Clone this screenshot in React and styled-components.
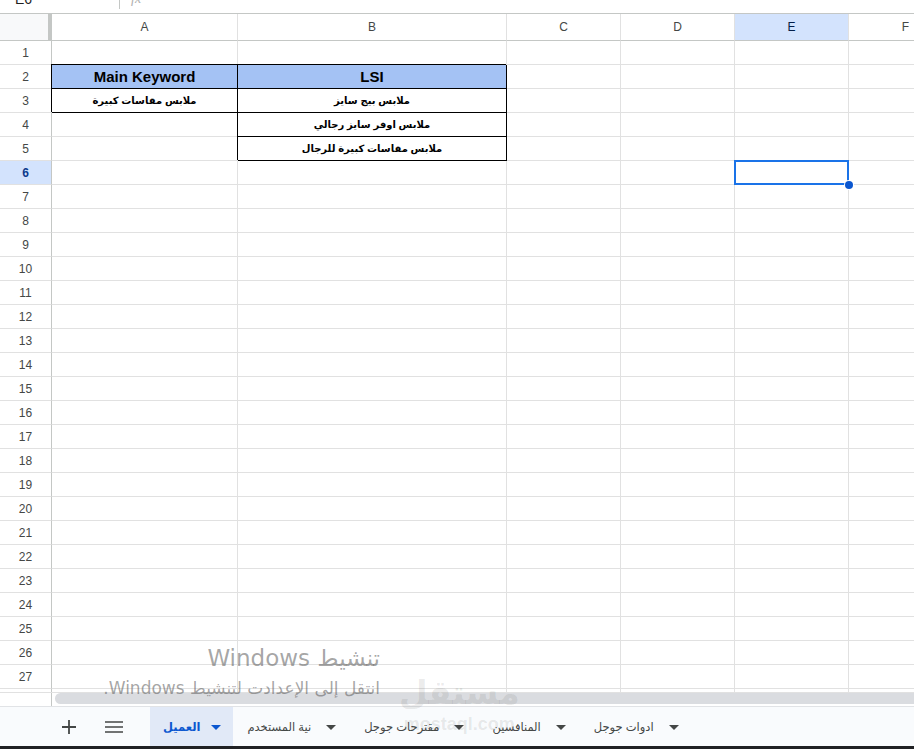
import React from "react";
import styled, { createGlobalStyle, css } from "styled-components";

const COLS = [
  { key: "A", w: 186 },
  { key: "B", w: 269 },
  { key: "C", w: 114 },
  { key: "D", w: 114 },
  { key: "E", w: 114 },
  { key: "F", w: 114 },
];

const BLUE = "#a4c2f4";

const DATA = {
  "2A": { text: "Main Keyword", fill: BLUE, boxed: true, latin: true },
  "2B": { text: "LSI", fill: BLUE, boxed: true, latin: true },
  "3A": { text: "ملابس مقاسات كبيرة", boxed: true },
  "3B": { text: "ملابس بيج سايز", boxed: true },
  "4B": { text: "ملابس اوفر سايز رجالي", boxed: true },
  "5B": { text: "ملابس مقاسات كبيرة للرجال", boxed: true },
};

const SELECTED = "6E";

const TABS = [
  { name: "العميل", active: true },
  { name: "نية المستخدم" },
  { name: "مقترحات جوجل" },
  { name: "المنافسين" },
  { name: "ادوات جوجل" },
];

const GlobalStyle = createGlobalStyle`
  html, body {
    margin: 0;
    padding: 0;
    background: #fff;
    overflow: hidden;
  }
  body {
    font-family: "Liberation Sans", Arial, "DejaVu Sans", sans-serif;
  }
`;

const Page = styled.div`
  position: relative;
  width: 914px;
  height: 749px;
  display: flex;
  flex-direction: column;
  overflow: hidden;
`;

const TopStrip = styled.div`
  height: 14px;
  box-sizing: border-box;
  border-bottom: 1px solid #c4c7c5;
  display: flex;
  align-items: flex-end;
  overflow: hidden;
`;

const NameBox = styled.div`
  width: 119px;
  box-sizing: border-box;
  padding-left: 15px;
  font: 500 14px "Liberation Sans", sans-serif;
  line-height: 14px;
  margin-bottom: 7px;
  color: #1f1f1f;
`;

const Divider = styled.div`
  width: 1px;
  height: 9px;
  background: #c4c7c5;
  align-self: flex-start;
`;

const Fx = styled.div`
  margin-left: 11px;
  margin-bottom: 7px;
  font: italic 14px "Liberation Serif", serif;
  line-height: 14px;
  color: #b0b0b0;
`;

const HeaderRow = styled.div`
  display: flex;
  height: 27px;
  flex-shrink: 0;
`;

const Corner = styled.div`
  flex: 0 0 52px;
  box-sizing: border-box;
  background: #f8f9fa;
  border-right: 4px solid #c4c7c5;
  border-bottom: 1px solid #c4c7c5;
`;

const ColHead = styled.div`
  flex: 0 0 ${(p) => p.$w}px;
  box-sizing: border-box;
  border-right: 1px solid #e1e1e1;
  border-bottom: 1px solid #c4c7c5;
  display: flex;
  align-items: center;
  justify-content: center;
  font: 12px "Liberation Sans", Arial, sans-serif;
  color: ${(p) => (p.$active ? "#041e49" : "#444746")};
  background: ${(p) => (p.$active ? "#d3e3fd" : "#fff")};
  font-weight: ${(p) => (p.$active ? 500 : 400)};
`;

const Body = styled.div`
  height: 651px;
  overflow: hidden;
  flex-shrink: 0;
`;

const Row = styled.div`
  display: flex;
  height: 24px;
`;

const RowHead = styled.div`
  flex: 0 0 52px;
  box-sizing: border-box;
  border-right: 1px solid #c4c7c5;
  border-bottom: 1px solid #e1e1e1;
  display: flex;
  align-items: center;
  justify-content: center;
  font: 12px "Liberation Sans", Arial, sans-serif;
  color: ${(p) => (p.$active ? "#0b3a8c" : "#444746")};
  background: ${(p) => (p.$active ? "#d3e3fd" : "#fff")};
  font-weight: ${(p) => (p.$active ? 700 : 400)};
`;

const selectedBox = css`
  position: relative;
  &::before {
    content: "";
    position: absolute;
    top: -1px;
    left: -1px;
    right: -1px;
    bottom: -1px;
    border: 2px solid #1a73e8;
  }
  &::after {
    content: "";
    position: absolute;
    right: -5px;
    bottom: -5px;
    width: 8px;
    height: 8px;
    border-radius: 50%;
    background: #0b57d0;
    box-shadow: 0 0 0 1px #fff;
  }
`;

const Cell = styled.div`
  flex: 0 0 ${(p) => p.$w}px;
  box-sizing: border-box;
  border-right: 1px solid ${(p) => (p.$boxed ? "#000" : "#e1e1e1")};
  border-bottom: 1px solid ${(p) => (p.$boxed ? "#000" : "#e1e1e1")};
  box-shadow: ${(p) => (p.$boxed ? "-1px -1px 0 0 #000" : "none")};
  background: ${(p) => p.$fill || "#fff"};
  display: flex;
  align-items: center;
  justify-content: center;
  font-family: "Liberation Sans", Arial, "DejaVu Sans", sans-serif;
  font-weight: 700;
  font-size: ${(p) => (p.$latin ? "15px" : "10px")};
  color: #000;
  white-space: nowrap;
  ${(p) => p.$selected && selectedBox}
`;

const ScrollTrack = styled.div`
  height: 14px;
  box-sizing: border-box;
  border-top: 1px solid #e1e1e1;
  display: flex;
  align-items: flex-start;
  flex-shrink: 0;
`;

const TrackGap = styled.div`
  flex: 0 0 52px;
  height: 100%;
  box-sizing: border-box;
  border-right: 1px solid #c4c7c5;
`;

const Thumb = styled.div`
  flex: 1;
  margin-left: 3px;
  margin-right: -20px;
  height: 11px;
  border-radius: 6px;
  background: #dadce0;
`;

const TabBar = styled.div`
  height: 40px;
  box-sizing: border-box;
  border-top: 1px solid #e1e3e6;
  background: #f9fbfd;
  display: flex;
  align-items: stretch;
  padding-left: 52px;
  flex-shrink: 0;
`;

const IconButton = styled.div`
  width: 34px;
  margin-left: ${(p) => p.$gap || 0}px;
  display: flex;
  align-items: center;
  justify-content: center;
  color: #444746;
`;

const Tabs = styled.div`
  display: flex;
  margin-left: 19px;
`;

const Tab = styled.div`
  display: flex;
  align-items: center;
  gap: ${(p) => (p.$active ? 11 : 15)}px;
  padding: ${(p) => (p.$active ? "0 12px 0 13px" : "0 14px 0 14px")};
  background: ${(p) => (p.$active ? "#e1e9f7" : "transparent")};
  color: ${(p) => (p.$active ? "#0b57d0" : "#444746")};
  font: ${(p) => (p.$active ? 700 : 400)} 11.5px "Liberation Sans", "DejaVu Sans", sans-serif;
  white-space: nowrap;
`;

const Caret = styled.span`
  width: 0;
  height: 0;
  border-left: 5px solid transparent;
  border-right: 5px solid transparent;
  border-top: 5px solid currentColor;
  margin-top: 1px;
`;

const BottomEdge = styled.div`
  height: 3px;
  background: #202124;
  flex-shrink: 0;
`;

const Activation = styled.div`
  position: absolute;
  top: 642px;
  right: 534px;
  direction: rtl;
  text-align: right;
  color: rgba(90, 90, 90, 0.55);
  font-family: "DejaVu Sans", "Liberation Sans", sans-serif;
  pointer-events: none;
  white-space: nowrap;
`;

const ActTitle = styled.div`
  font-size: 23px;
  line-height: 32px;
`;

const ActHint = styled.div`
  font-size: 17px;
  line-height: 24px;
  margin-top: 2px;
`;

const Brand = styled.div`
  position: absolute;
  left: 399px;
  top: 670px;
  display: flex;
  flex-direction: column;
  align-items: center;
  color: rgba(60, 60, 60, 0.11);
  pointer-events: none;
`;

const BrandMark = styled.div`
  font: 700 33px "DejaVu Sans", sans-serif;
  line-height: 46px;
`;

const BrandUrl = styled.div`
  font: 700 18px "Liberation Sans", sans-serif;
  line-height: 18px;
  margin-top: -1px;
`;

const PlusIcon = () => (
  <svg width="14" height="14" viewBox="0 0 14 14">
    <path d="M7 0v14M0 7h14" stroke="currentColor" strokeWidth="1.8" />
  </svg>
);

const MenuIcon = () => (
  <svg width="18" height="12" viewBox="0 0 18 12">
    <path d="M0 1h18M0 6h18M0 11h18" stroke="currentColor" strokeWidth="1.6" />
  </svg>
);

const ROWS = Array.from({ length: 28 }, (_, i) => i + 1);

export default function App() {
  return (
    <>
      <GlobalStyle />
      <Page>
        <TopStrip>
          <NameBox>E6</NameBox>
          <Divider />
          <Fx>fx</Fx>
        </TopStrip>

        <HeaderRow>
          <Corner />
          {COLS.map((c) => (
            <ColHead key={c.key} $w={c.w} $active={c.key === "E"}>
              {c.key}
            </ColHead>
          ))}
        </HeaderRow>

        <Body>
          {ROWS.map((r) => (
            <Row key={r}>
              <RowHead $active={r === 6}>{r}</RowHead>
              {COLS.map((c) => {
                const id = `${r}${c.key}`;
                const d = DATA[id] || {};
                return (
                  <Cell
                    key={id}
                    $w={c.w}
                    $boxed={d.boxed}
                    $fill={d.fill}
                    $latin={d.latin}
                    $selected={id === SELECTED}
                    dir={d.latin ? "ltr" : "rtl"}
                  >
                    {d.text}
                  </Cell>
                );
              })}
            </Row>
          ))}
        </Body>

        <ScrollTrack>
          <TrackGap />
          <Thumb />
        </ScrollTrack>

        <TabBar>
          <IconButton>
            <PlusIcon />
          </IconButton>
          <IconButton $gap={11}>
            <MenuIcon />
          </IconButton>
          <Tabs>
            {TABS.map((t) => (
              <Tab key={t.name} $active={t.active}>
                <span dir="rtl">{t.name}</span>
                <Caret />
              </Tab>
            ))}
          </Tabs>
        </TabBar>
        <BottomEdge />

        <Activation>
          <ActTitle>تنشيط Windows</ActTitle>
          <ActHint>انتقل إلى الإعدادت لتنشيط Windows.</ActHint>
        </Activation>

        <Brand>
          <BrandMark>مستقل</BrandMark>
          <BrandUrl>mostaql.com</BrandUrl>
        </Brand>
      </Page>
    </>
  );
}
